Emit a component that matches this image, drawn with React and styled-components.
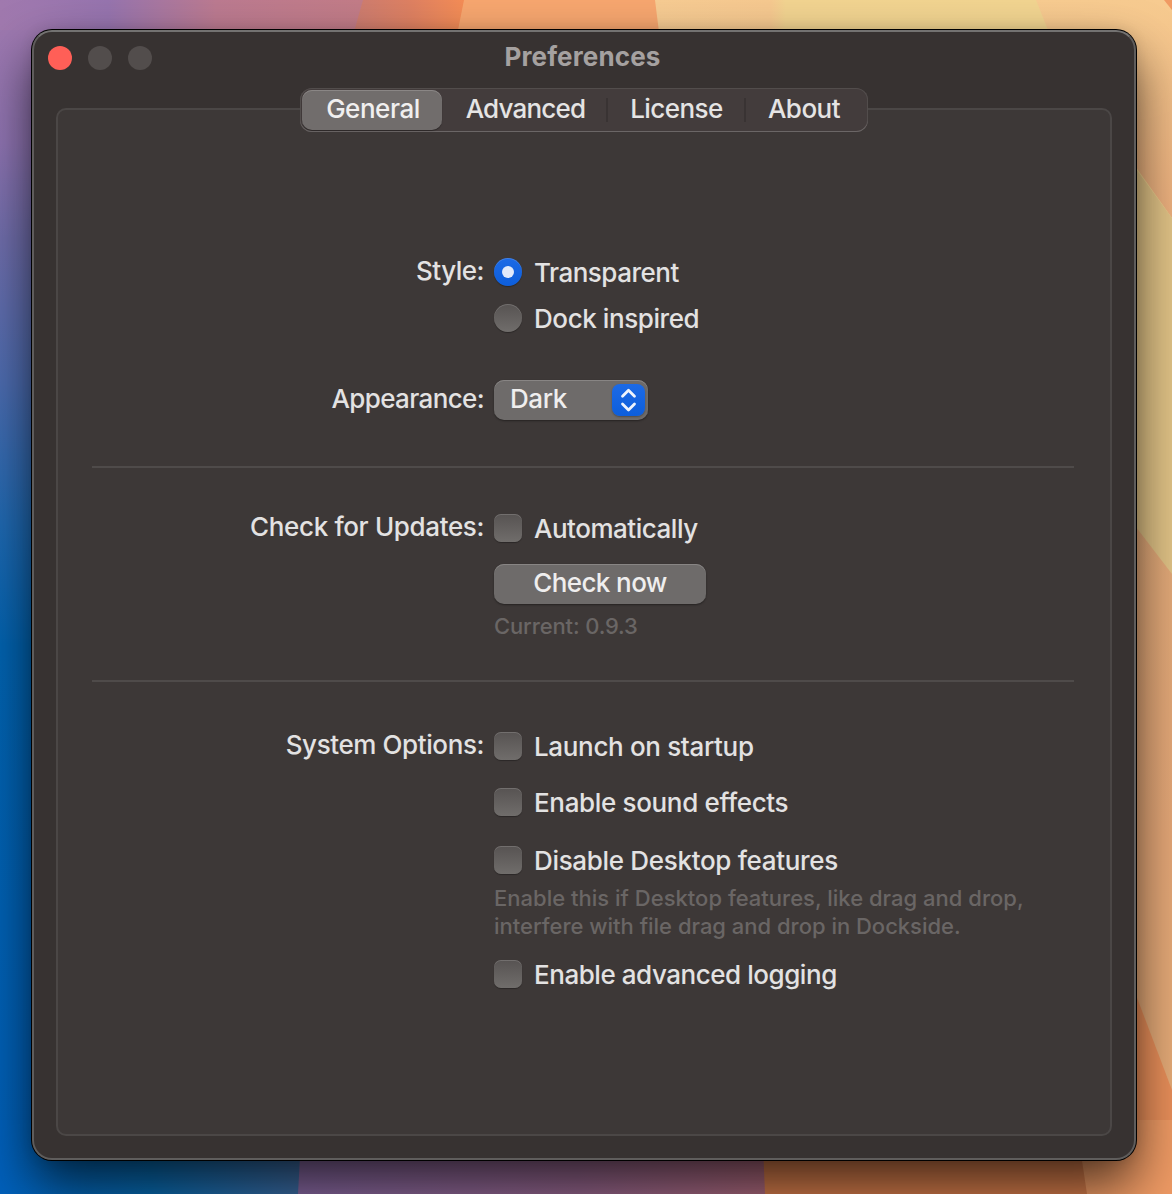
import React, { useState } from "react";
import styled, { createGlobalStyle, css } from "styled-components";

const Global = createGlobalStyle`
  *, *::before, *::after { box-sizing: border-box; }
  html, body { margin: 0; padding: 0; }
  body {
    font-family: Inter, "Liberation Sans", sans-serif;
    font-size: 26px;
    font-weight: 450;
    color: #e3e2e2;
    overflow: hidden;
    -webkit-font-smoothing: antialiased;
  }
`;

const Desktop = styled.div`
  position: relative;
  width: 1172px;
  height: 1194px;
  padding: 30px 36px 34px 32px;
  overflow: hidden;
`;

const WallpaperSvg = styled.svg`
  position: absolute;
  inset: 0;
  display: block;
`;

const Window = styled.main`
  position: relative;
  display: flex;
  flex-direction: column;
  height: 1130px;
  padding: 0 22px 22px;
  border: 2px solid #5f5d5c;
  border-top-color: #737271;
  border-radius: 20px;
  background: #373231;
  box-shadow: 0 0 0 1px #000, 0 26px 52px rgba(0, 0, 0, 0.66), 0 0 14px rgba(0, 0, 0, 0.12);
`;

const TitleBar = styled.header`
  display: grid;
  grid-template-columns: 1fr auto 1fr;
  align-items: center;
  height: 52px;
  margin: 0 -8px 4px;
`;

const Lights = styled.div`
  display: flex;
  gap: 16px;
`;

const Light = styled.span`
  width: 24px;
  height: 24px;
  border-radius: 50%;
  background: ${(p) => (p.$close ? "#ff5f57" : "#524d4c")};
`;

const Title = styled.h1`
  margin: 0;
  padding: 0 3px 2px 0;
  font-size: 26px;
  line-height: 32px;
  font-weight: 700;
  letter-spacing: 0.12px;
  color: #a5a1a0;
`;

const Tabs = styled.nav`
  position: relative;
  z-index: 1;
  display: flex;
  align-self: center;
  height: 44px;
  padding: 2px;
  border-radius: 12px;
  background: #433c3c;
  box-shadow: inset 0 -1px 0 #6b6666, inset 0 0 0 1px #524d4c;
`;

const Tab = styled.button`
  position: relative;
  width: ${(p) => p.$width}px;
  padding: ${(p) => (p.$shift > 0 ? `0 0 2px ${p.$shift}px` : `0 ${-p.$shift}px 2px 0`)};
  border: 0;
  border-radius: 10px;
  font: inherit;
  line-height: 32px;
  color: #e5e4e4;
  background: none;
  ${(p) =>
    p.$active &&
    css`
      color: #f0efef;
      background: #716d6c;
      box-shadow: inset 0 1px 0 #8a8685, 0 1px 1px rgba(0, 0, 0, 0.35);
    `}
  ${(p) =>
    p.$divided &&
    css`
      &::before {
        content: "";
        position: absolute;
        left: -1px;
        top: 8px;
        width: 2px;
        height: 24px;
        background: #393333;
      }
    `}
`;

const Panel = styled.section`
  flex: 1;
  margin-top: -24px;
  padding: 145px 36px 0 34px;
  border: 2px solid #4b4746;
  border-radius: 10px;
  background: #3d3837;
`;

const Row = styled.div`
  display: grid;
  grid-template-columns: 392px 1fr;
  column-gap: 10px;
  margin-top: ${(p) => p.$top || 0}px;
`;

const RowLabel = styled.div`
  padding-top: ${(p) => p.$top || 0}px;
  line-height: 32px;
  text-align: right;
  white-space: nowrap;
`;

const Stack = styled.div`
  display: flex;
  flex-direction: column;
  align-items: flex-start;
`;

const Choice = styled.label`
  display: flex;
  align-items: center;
  gap: 12px;
  height: 32px;
  margin-top: ${(p) => p.$top || 0}px;
  padding-bottom: 2px;
  white-space: nowrap;
`;

const Text = styled.span`
  letter-spacing: ${(p) => p.$track || 0}px;
`;

const Radio = styled.span`
  display: grid;
  place-items: center;
  width: 28px;
  height: 28px;
  border-radius: 50%;
  background: ${(p) => (p.$on ? "linear-gradient(#1c6ae6, #0d5edb)" : "linear-gradient(#575352, #706d6b)")};
  box-shadow: inset 0 1px 0 rgba(255, 255, 255, 0.16), 0 1px 1px rgba(0, 0, 0, 0.3);
  &::after {
    content: "";
    width: 12px;
    height: 12px;
    border-radius: 50%;
    background: ${(p) => (p.$on ? "#e2eafa" : "transparent")};
  }
`;

const Check = styled.span`
  width: 28px;
  height: 28px;
  border-radius: 7px;
  background: linear-gradient(#575352, #706d6b);
  box-shadow: inset 0 1px 0 rgba(255, 255, 255, 0.16), 0 1px 1px rgba(0, 0, 0, 0.3);
`;

const control = css`
  height: 40px;
  border: 0;
  border-radius: 10px;
  font: inherit;
  color: #efeeee;
  background: #6e6b6a;
  box-shadow: inset 0 1px 0 #888584, 0 1px 2px rgba(0, 0, 0, 0.4);
`;

const Select = styled.button`
  ${control}
  display: flex;
  align-items: center;
  justify-content: space-between;
  width: 154px;
  padding: 0 3px 0 16px;
  span { margin-top: -3px; }
`;

const Stepper = styled.svg`
  width: 33px;
  height: 32px;
  border-radius: 8px;
  background: linear-gradient(#1c6ae6, #0d5edb);
  box-shadow: 0 1px 2px rgba(0, 0, 0, 0.3);
`;

const PushButton = styled.button`
  ${control}
  width: 212px;
  margin-top: 19px;
  padding: 0 0 3px;
`;

const Note = styled.p`
  margin: ${(p) => p.$top}px 0 0;
  font-size: 22px;
  line-height: 28px;
  color: #6a6665;
  white-space: nowrap;
`;

const Rule = styled.hr`
  width: 982px;
  height: 2px;
  margin: ${(p) => p.$top}px 0 0;
  border: 0;
  background: #4f4b4a;
`;

function Wallpaper() {
  return (
    <WallpaperSvg width="1172" height="1194" viewBox="0 0 1172 1194" aria-hidden="true">
      <defs>
        <linearGradient id="left" x1="0" y1="0" x2="0" y2="1">
          <stop offset="0" stopColor="#a079ae" />
          <stop offset="0.12" stopColor="#8f74b2" />
          <stop offset="0.2" stopColor="#706eac" />
          <stop offset="0.32" stopColor="#4d6cb0" />
          <stop offset="0.44" stopColor="#1f69b2" />
          <stop offset="0.54" stopColor="#0263b0" />
          <stop offset="1" stopColor="#005fb8" />
        </linearGradient>
        <linearGradient id="topRose" x1="0" y1="0" x2="360" y2="0" gradientUnits="userSpaceOnUse">
          <stop offset="0" stopColor="#a079ae" />
          <stop offset="0.09" stopColor="#9e78af" />
          <stop offset="0.3" stopColor="#9674ae" />
          <stop offset="0.6" stopColor="#bb7a90" />
          <stop offset="1" stopColor="#c27c87" />
        </linearGradient>
        <linearGradient id="topCoral" x1="355" y1="0" x2="463" y2="0" gradientUnits="userSpaceOnUse">
          <stop offset="0" stopColor="#cc7c70" />
          <stop offset="0.5" stopColor="#dd8062" />
          <stop offset="1" stopColor="#f38c56" />
        </linearGradient>
        <linearGradient id="topGold" x1="655" y1="0" x2="1040" y2="0" gradientUnits="userSpaceOnUse">
          <stop offset="0" stopColor="#f6cb92" />
          <stop offset="0.3" stopColor="#f5c88f" />
          <stop offset="0.34" stopColor="#f1d390" />
          <stop offset="1" stopColor="#f1d490" />
        </linearGradient>
        <linearGradient id="right" x1="0" y1="0" x2="0" y2="1194" gradientUnits="userSpaceOnUse">
          <stop offset="0" stopColor="#f7cb90" />
          <stop offset="0.18" stopColor="#edb07e" />
          <stop offset="1" stopColor="#efb481" />
        </linearGradient>
        <linearGradient id="rightTan" x1="0" y1="480" x2="0" y2="1090" gradientUnits="userSpaceOnUse">
          <stop offset="0" stopColor="#e3ab7a" />
          <stop offset="0.6" stopColor="#e6a878" />
          <stop offset="1" stopColor="#e6ac78" />
        </linearGradient>
        <linearGradient id="bottomBlue" x1="0" y1="0" x2="300" y2="0" gradientUnits="userSpaceOnUse">
          <stop offset="0" stopColor="#0060bb" />
          <stop offset="0.5" stopColor="#0869ae" />
          <stop offset="1" stopColor="#3c6aa0" />
        </linearGradient>
        <linearGradient id="bottomPlum" x1="300" y1="0" x2="764" y2="0" gradientUnits="userSpaceOnUse">
          <stop offset="0" stopColor="#8667a0" />
          <stop offset="0.6" stopColor="#93648b" />
          <stop offset="1" stopColor="#a9667a" />
        </linearGradient>
      </defs>
      <rect width="600" height="1194" fill="url(#left)" />
      <rect width="372" height="30" fill="url(#topRose)" />
      <path d="M363 0H600V60H346Z" fill="url(#topCoral)" />
      <path d="M464 0H700V60H452Z" fill="#f6a66f" />
      <path d="M655 0H1172V600H730Z" fill="url(#topGold)" />
      <path d="M1036 0H1172V218L1060 60Z" fill="url(#right)" />
      <path d="M1164 0H1172V10Z" fill="#f09a63" />
      <path d="M1100 120L1172 218V580L1100 480Z" fill="#e2c487" />
      <path d="M1100 480L1172 574V1194H1100Z" fill="url(#rightTan)" />
      <path d="M1100 900L1172 1090V1194H1080Z" fill="#e98f5a" />
      <rect y="1120" width="304" height="74" fill="url(#bottomBlue)" />
      <path d="M302 1120H780V1194H298Z" fill="url(#bottomPlum)" />
      <path d="M762 1120H1096V1194H765Z" fill="#d37b4a" />
      <path d="M1076 1120H1172V1194H1087Z" fill="#ee9a64" />
    </WallpaperSvg>
  );
}

const TABS = [
  { name: "General", width: 140, shift: 2, track: -0.45 },
  { name: "Advanced", width: 165, shift: 2, track: -0.8 },
  { name: "License", width: 138, shift: 1, track: -0.55 },
  { name: "About", width: 121, shift: -3, track: -0.5 },
];

export default function App() {
  const [tab, setTab] = useState("General");
  return (
    <Desktop>
      <Global />
      <Wallpaper />
      <Window>
        <TitleBar>
          <Lights>
            <Light $close />
            <Light />
            <Light />
          </Lights>
          <Title>Preferences</Title>
        </TitleBar>
        <Tabs>
          {TABS.map((t, i) => (
            <Tab
              key={t.name}
              $width={t.width}
              $shift={t.shift}
              $active={t.name === tab}
              $divided={i > 1}
              onClick={() => setTab(t.name)}
            >
              <Text $track={t.track}>{t.name}</Text>
            </Tab>
          ))}
        </Tabs>
        <Panel>
          <Row>
            <RowLabel><Text $track={-0.5}>Style:</Text></RowLabel>
            <Stack>
              <Choice $top={2}><Radio $on /><Text $track={-0.5}>Transparent</Text></Choice>
              <Choice $top={14}><Radio /><Text $track={-0.42}>Dock inspired</Text></Choice>
            </Stack>
          </Row>
          <Row $top={45}>
            <RowLabel $top={3}><Text $track={-0.62}>Appearance:</Text></RowLabel>
            <Select>
              <Text $track={-0.45}>Dark</Text>
              <Stepper viewBox="0 0 33 32" fill="none" stroke="#eef3fc" strokeWidth="2.8" strokeLinecap="round" strokeLinejoin="round">
                <path d="M10.5 12.2L16.5 6.2L22.5 12.2M10.5 20L16.5 26L22.5 20" />
              </Stepper>
            </Select>
          </Row>
          <Rule $top={46} />
          <Row $top={43}>
            <RowLabel><Text $track={-0.35}>Check for Updates:</Text></RowLabel>
            <Stack>
              <Choice $top={2}><Check /><Text $track={-0.48}>Automatically</Text></Choice>
              <PushButton><Text $track={-0.6}>Check now</Text></PushButton>
              <Note $top={8}><Text $track={-0.14}>Current: 0.9.3</Text></Note>
            </Stack>
          </Row>
          <Rule $top={40} />
          <Row $top={47}>
            <RowLabel><Text $track={-0.4}>System Options:</Text></RowLabel>
            <Stack>
              <Choice $top={2}><Check /><Text $track={-0.34}>Launch on startup</Text></Choice>
              <Choice $top={24}><Check /><Text $track={-0.34}>Enable sound effects</Text></Choice>
              <Choice $top={26}><Check /><Text $track={-0.32}>Disable Desktop features</Text></Choice>
              <Note $top={7}>
                <Text $track={0.01}>Enable this if Desktop features, like drag and drop,</Text>
                <br />
                <Text $track={-0.01}>interfere with file drag and drop in Dockside.</Text>
              </Note>
              <Choice $top={19}><Check /><Text $track={-0.45}>Enable advanced logging</Text></Choice>
            </Stack>
          </Row>
        </Panel>
      </Window>
    </Desktop>
  );
}
